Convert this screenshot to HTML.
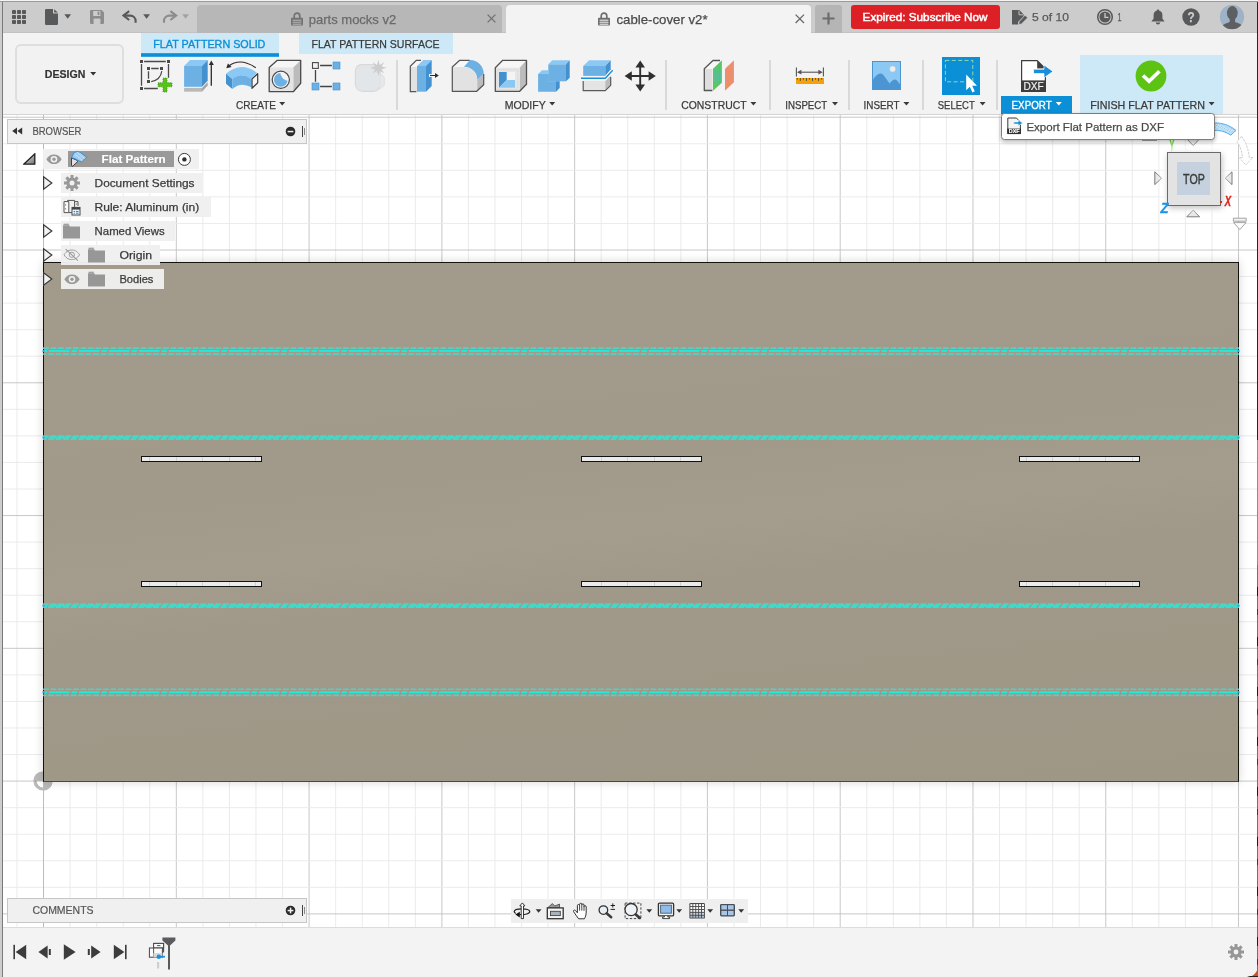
<!DOCTYPE html>
<html lang="en"><head><meta charset="utf-8"><title>cable-cover v2 - Flat Pattern</title>
<style>
html,body{margin:0;padding:0;}
body{width:1258px;height:977px;overflow:hidden;position:relative;background:#fff;font-family:"Liberation Sans",sans-serif;}
.a{position:absolute;display:block;}
.x{will-change:transform;}
svg text{font-family:"Liberation Sans",sans-serif;white-space:pre;}
</style></head>
<body>
<svg class="a" style="left:0px;top:0px;" width="1258" height="977"><g stroke-width="0.9" fill="none"><path d="M16.99 115V927" stroke="#e9e9e9"/><path d="M70.10 115V927" stroke="#e9e9e9"/><path d="M96.66 115V927" stroke="#e9e9e9"/><path d="M123.21 115V927" stroke="#e9e9e9"/><path d="M149.77 115V927" stroke="#e9e9e9"/><path d="M176.32 115V927" stroke="#c2c2c2"/><path d="M202.88 115V927" stroke="#e9e9e9"/><path d="M229.44 115V927" stroke="#e9e9e9"/><path d="M255.99 115V927" stroke="#e9e9e9"/><path d="M282.55 115V927" stroke="#e9e9e9"/><path d="M309.10 115V927" stroke="#c2c2c2"/><path d="M335.66 115V927" stroke="#e9e9e9"/><path d="M362.21 115V927" stroke="#e9e9e9"/><path d="M388.76 115V927" stroke="#e9e9e9"/><path d="M415.32 115V927" stroke="#e9e9e9"/><path d="M441.88 115V927" stroke="#c2c2c2"/><path d="M468.43 115V927" stroke="#e9e9e9"/><path d="M494.99 115V927" stroke="#e9e9e9"/><path d="M521.54 115V927" stroke="#e9e9e9"/><path d="M548.10 115V927" stroke="#e9e9e9"/><path d="M574.65 115V927" stroke="#c2c2c2"/><path d="M601.20 115V927" stroke="#e9e9e9"/><path d="M627.76 115V927" stroke="#e9e9e9"/><path d="M654.31 115V927" stroke="#e9e9e9"/><path d="M680.87 115V927" stroke="#e9e9e9"/><path d="M707.42 115V927" stroke="#c2c2c2"/><path d="M733.98 115V927" stroke="#e9e9e9"/><path d="M760.53 115V927" stroke="#e9e9e9"/><path d="M787.09 115V927" stroke="#e9e9e9"/><path d="M813.64 115V927" stroke="#e9e9e9"/><path d="M840.20 115V927" stroke="#c2c2c2"/><path d="M866.75 115V927" stroke="#e9e9e9"/><path d="M893.31 115V927" stroke="#e9e9e9"/><path d="M919.86 115V927" stroke="#e9e9e9"/><path d="M946.42 115V927" stroke="#e9e9e9"/><path d="M972.97 115V927" stroke="#c2c2c2"/><path d="M999.53 115V927" stroke="#e9e9e9"/><path d="M1026.09 115V927" stroke="#e9e9e9"/><path d="M1052.64 115V927" stroke="#e9e9e9"/><path d="M1079.19 115V927" stroke="#e9e9e9"/><path d="M1105.75 115V927" stroke="#c2c2c2"/><path d="M1132.30 115V927" stroke="#e9e9e9"/><path d="M1158.86 115V927" stroke="#e9e9e9"/><path d="M1185.41 115V927" stroke="#e9e9e9"/><path d="M1211.97 115V927" stroke="#e9e9e9"/><path d="M1238.52 115V927" stroke="#c2c2c2"/><path d="M3 117.23H1257" stroke="#c2c2c2"/><path d="M3 143.78H1257" stroke="#e9e9e9"/><path d="M3 170.34H1257" stroke="#e9e9e9"/><path d="M3 196.89H1257" stroke="#e9e9e9"/><path d="M3 223.45H1257" stroke="#e9e9e9"/><path d="M3 250.00H1257" stroke="#c2c2c2"/><path d="M3 276.56H1257" stroke="#e9e9e9"/><path d="M3 303.11H1257" stroke="#e9e9e9"/><path d="M3 329.67H1257" stroke="#e9e9e9"/><path d="M3 356.22H1257" stroke="#e9e9e9"/><path d="M3 382.78H1257" stroke="#c2c2c2"/><path d="M3 409.33H1257" stroke="#e9e9e9"/><path d="M3 435.89H1257" stroke="#e9e9e9"/><path d="M3 462.44H1257" stroke="#e9e9e9"/><path d="M3 489.00H1257" stroke="#e9e9e9"/><path d="M3 515.55H1257" stroke="#c2c2c2"/><path d="M3 542.11H1257" stroke="#e9e9e9"/><path d="M3 568.66H1257" stroke="#e9e9e9"/><path d="M3 595.22H1257" stroke="#e9e9e9"/><path d="M3 621.77H1257" stroke="#e9e9e9"/><path d="M3 648.33H1257" stroke="#c2c2c2"/><path d="M3 674.88H1257" stroke="#e9e9e9"/><path d="M3 701.44H1257" stroke="#e9e9e9"/><path d="M3 727.99H1257" stroke="#e9e9e9"/><path d="M3 754.55H1257" stroke="#e9e9e9"/><path d="M3 781.10H1257" stroke="#c2c2c2"/><path d="M3 807.65H1257" stroke="#e9e9e9"/><path d="M3 834.21H1257" stroke="#e9e9e9"/><path d="M3 860.76H1257" stroke="#e9e9e9"/><path d="M3 887.32H1257" stroke="#e9e9e9"/><path d="M3 913.88H1257" stroke="#c2c2c2"/></g><rect x="43" y="115" width="1" height="812" fill="#86e86a"/></svg>
<svg class="a" style="left:31px;top:769px;" width="24" height="24"><circle cx="12" cy="12" r="8" fill="none" stroke="#b9b9b9" stroke-width="3.2"/><path d="M12 12V2.4A9.6 9.6 0 0 0 2.4 12Z" fill="#b9b9b9"/><path d="M12 12V21.6A9.6 9.6 0 0 0 21.6 12Z" fill="#b9b9b9"/><rect x="4" y="11.5" width="1.3" height="1.3" fill="#e8835a"/></svg>
<div class="a" style="left:43px;top:781px;width:1px;height:12px;background:#86e86a;"></div>
<div class="a" style="left:43px;top:262px;width:1196px;height:520px;background:linear-gradient(174deg,#a29b8b 0%,#a19a8a 40%,#a49d8d 51%,#a09989 60%,#9e9786 100%);box-sizing:border-box;border:1px solid #14140f;border-bottom-color:#4a4840;box-shadow:0 0 9px rgba(0,0,0,0.17);"></div>
<svg class="a" style="left:0px;top:0px;" width="1258" height="977"><line x1="43" x2="1239" y1="348.05" y2="348.05" stroke="#55d3c2" stroke-opacity="0.9" stroke-width="1.7" stroke-dasharray="5.9 1.6" stroke-dashoffset="0"/><line x1="43" x2="1239" y1="354.15000000000003" y2="354.15000000000003" stroke="#55d3c2" stroke-opacity="0.9" stroke-width="1.7" stroke-dasharray="5.9 1.6" stroke-dashoffset="2.4"/><line x1="43" x2="1239" y1="351.1" y2="351.1" stroke="#21e8d9" stroke-width="2" stroke-dasharray="20.5 2.2 5.5 1.8" stroke-dashoffset="24"/><rect x="42.5" y="350.1" width="2" height="2" fill="#2aa0f0"/><rect x="1237.5" y="350.1" width="2" height="2" fill="#2aa0f0"/><line x1="43" x2="1239" y1="436.1" y2="436.1" stroke="#55d3c2" stroke-opacity="0.9" stroke-width="1.7" stroke-dasharray="5.9 1.6" stroke-dashoffset="0"/><line x1="43" x2="1239" y1="439.1" y2="439.1" stroke="#55d3c2" stroke-opacity="0.9" stroke-width="1.7" stroke-dasharray="5.9 1.6" stroke-dashoffset="2.4"/><line x1="43" x2="1239" y1="437.6" y2="437.6" stroke="#21e8d9" stroke-width="2" stroke-dasharray="20.5 2.2 5.5 1.8" stroke-dashoffset="24"/><rect x="42.5" y="436.6" width="2" height="2" fill="#2aa0f0"/><rect x="1237.5" y="436.6" width="2" height="2" fill="#2aa0f0"/><line x1="43" x2="1239" y1="604.2" y2="604.2" stroke="#55d3c2" stroke-opacity="0.9" stroke-width="1.7" stroke-dasharray="5.9 1.6" stroke-dashoffset="0"/><line x1="43" x2="1239" y1="607.2" y2="607.2" stroke="#55d3c2" stroke-opacity="0.9" stroke-width="1.7" stroke-dasharray="5.9 1.6" stroke-dashoffset="2.4"/><line x1="43" x2="1239" y1="605.7" y2="605.7" stroke="#21e8d9" stroke-width="2" stroke-dasharray="20.5 2.2 5.5 1.8" stroke-dashoffset="24"/><rect x="42.5" y="604.7" width="2" height="2" fill="#2aa0f0"/><rect x="1237.5" y="604.7" width="2" height="2" fill="#2aa0f0"/><line x1="43" x2="1239" y1="689.25" y2="689.25" stroke="#55d3c2" stroke-opacity="0.9" stroke-width="1.7" stroke-dasharray="5.9 1.6" stroke-dashoffset="0"/><line x1="43" x2="1239" y1="695.3499999999999" y2="695.3499999999999" stroke="#55d3c2" stroke-opacity="0.9" stroke-width="1.7" stroke-dasharray="5.9 1.6" stroke-dashoffset="2.4"/><line x1="43" x2="1239" y1="692.3" y2="692.3" stroke="#21e8d9" stroke-width="2" stroke-dasharray="20.5 2.2 5.5 1.8" stroke-dashoffset="24"/><rect x="42.5" y="691.3" width="2" height="2" fill="#2aa0f0"/><rect x="1237.5" y="691.3" width="2" height="2" fill="#2aa0f0"/></svg>
<div class="a" style="left:141px;top:456px;width:121px;height:6px;background:#ebebeb;box-sizing:border-box;border:1px solid #111;"></div>
<div class="a" style="left:149px;top:457px;width:1px;height:4px;background:#d2d2d2;"></div>
<div class="a" style="left:176px;top:457px;width:1px;height:4px;background:#d2d2d2;"></div>
<div class="a" style="left:202px;top:457px;width:1px;height:4px;background:#d2d2d2;"></div>
<div class="a" style="left:229px;top:457px;width:1px;height:4px;background:#d2d2d2;"></div>
<div class="a" style="left:255px;top:457px;width:1px;height:4px;background:#d2d2d2;"></div>
<div class="a" style="left:141px;top:581px;width:121px;height:6px;background:#ebebeb;box-sizing:border-box;border:1px solid #111;"></div>
<div class="a" style="left:149px;top:582px;width:1px;height:4px;background:#d2d2d2;"></div>
<div class="a" style="left:176px;top:582px;width:1px;height:4px;background:#d2d2d2;"></div>
<div class="a" style="left:202px;top:582px;width:1px;height:4px;background:#d2d2d2;"></div>
<div class="a" style="left:229px;top:582px;width:1px;height:4px;background:#d2d2d2;"></div>
<div class="a" style="left:255px;top:582px;width:1px;height:4px;background:#d2d2d2;"></div>
<div class="a" style="left:581px;top:456px;width:121px;height:6px;background:#ebebeb;box-sizing:border-box;border:1px solid #111;"></div>
<div class="a" style="left:601px;top:457px;width:1px;height:4px;background:#d2d2d2;"></div>
<div class="a" style="left:627px;top:457px;width:1px;height:4px;background:#d2d2d2;"></div>
<div class="a" style="left:654px;top:457px;width:1px;height:4px;background:#d2d2d2;"></div>
<div class="a" style="left:680px;top:457px;width:1px;height:4px;background:#d2d2d2;"></div>
<div class="a" style="left:581px;top:581px;width:121px;height:6px;background:#ebebeb;box-sizing:border-box;border:1px solid #111;"></div>
<div class="a" style="left:601px;top:582px;width:1px;height:4px;background:#d2d2d2;"></div>
<div class="a" style="left:627px;top:582px;width:1px;height:4px;background:#d2d2d2;"></div>
<div class="a" style="left:654px;top:582px;width:1px;height:4px;background:#d2d2d2;"></div>
<div class="a" style="left:680px;top:582px;width:1px;height:4px;background:#d2d2d2;"></div>
<div class="a" style="left:1019px;top:456px;width:121px;height:6px;background:#ebebeb;box-sizing:border-box;border:1px solid #111;"></div>
<div class="a" style="left:1026px;top:457px;width:1px;height:4px;background:#d2d2d2;"></div>
<div class="a" style="left:1052px;top:457px;width:1px;height:4px;background:#d2d2d2;"></div>
<div class="a" style="left:1079px;top:457px;width:1px;height:4px;background:#d2d2d2;"></div>
<div class="a" style="left:1105px;top:457px;width:1px;height:4px;background:#d2d2d2;"></div>
<div class="a" style="left:1132px;top:457px;width:1px;height:4px;background:#d2d2d2;"></div>
<div class="a" style="left:1019px;top:581px;width:121px;height:6px;background:#ebebeb;box-sizing:border-box;border:1px solid #111;"></div>
<div class="a" style="left:1026px;top:582px;width:1px;height:4px;background:#d2d2d2;"></div>
<div class="a" style="left:1052px;top:582px;width:1px;height:4px;background:#d2d2d2;"></div>
<div class="a" style="left:1079px;top:582px;width:1px;height:4px;background:#d2d2d2;"></div>
<div class="a" style="left:1105px;top:582px;width:1px;height:4px;background:#d2d2d2;"></div>
<div class="a" style="left:1132px;top:582px;width:1px;height:4px;background:#d2d2d2;"></div>
<div class="a" style="left:3px;top:2px;width:1254px;height:31px;background:#cccccc;"></div>
<div class="a" style="left:3px;top:32px;width:1254px;height:1px;background:#c2c2c2;"></div>
<svg class="a" style="left:12px;top:10px;" width="14" height="14"><rect x="0" y="0" width="4" height="4" rx="0.8" fill="#58595b"/><rect x="0" y="5" width="4" height="4" rx="0.8" fill="#58595b"/><rect x="0" y="10" width="4" height="4" rx="0.8" fill="#58595b"/><rect x="5" y="0" width="4" height="4" rx="0.8" fill="#58595b"/><rect x="5" y="5" width="4" height="4" rx="0.8" fill="#58595b"/><rect x="5" y="10" width="4" height="4" rx="0.8" fill="#58595b"/><rect x="10" y="0" width="4" height="4" rx="0.8" fill="#58595b"/><rect x="10" y="5" width="4" height="4" rx="0.8" fill="#58595b"/><rect x="10" y="10" width="4" height="4" rx="0.8" fill="#58595b"/></svg>
<svg class="a" style="left:45px;top:9px;" width="13" height="16"><path d="M1.2 0H8V4.6H13V14.8A1.2 1.2 0 0 1 11.8 16H1.2A1.2 1.2 0 0 1 0 14.8V1.2A1.2 1.2 0 0 1 1.2 0Z" fill="#58595b"/><path d="M9.2 0.2L12.8 3.6H9.2Z" fill="#58595b"/></svg>
<svg class="a" style="left:64px;top:14px;" width="8" height="5"><g transform="translate(0.3,0.2)"><path d="M0 0H6.8L3.4 4.6Z" fill="#58595b"/></g></svg>
<svg class="a" style="left:90px;top:10px;" width="14" height="14"><path d="M1.2 0H11.6L14 2.4V12.8A1.2 1.2 0 0 1 12.8 14H1.2A1.2 1.2 0 0 1 0 12.8V1.2A1.2 1.2 0 0 1 1.2 0Z" fill="#8c8c8c"/><rect x="3.2" y="1" width="7.2" height="5" fill="#cccccc"/><rect x="7.6" y="1.6" width="1.8" height="3.4" fill="#8c8c8c"/><rect x="3.6" y="8.6" width="6.8" height="5.4" fill="#cccccc"/></svg>
<svg class="a" style="left:122px;top:10px;" width="16" height="14"><path d="M7.2 1.2L1.4 5.6L7.2 10" fill="none" stroke="#58595b" stroke-width="2.1" stroke-linejoin="miter"/><path d="M2.4 5.6H8.4A5.2 5.2 0 0 1 13.6 10.8V12.8" fill="none" stroke="#58595b" stroke-width="2.1"/></svg>
<svg class="a" style="left:143px;top:14px;" width="7" height="5"><g transform="translate(0.2,0.2)"><path d="M0 0H6.8L3.4 4.6Z" fill="#58595b"/></g></svg>
<svg class="a" style="left:161px;top:10px;" width="17" height="14"><g transform="translate(0.6,0)"><g transform="translate(16,0) scale(-1,1)"><path d="M7.2 1.2L1.4 5.6L7.2 10" fill="none" stroke="#8c8c8c" stroke-width="2.1"/><path d="M2.4 5.6H8.4A5.2 5.2 0 0 1 13.6 10.8V12.8" fill="none" stroke="#8c8c8c" stroke-width="2.1"/></g></g></svg>
<svg class="a" style="left:182px;top:14px;" width="7" height="5"><g transform="translate(0.2,0.2)"><path d="M0 0H6.8L3.4 4.6Z" fill="#a3a3a3"/></g></svg>
<div class="a" style="left:197px;top:5px;width:305px;height:28px;background:#b7b7b7;border-radius:4px 4px 0 0;"></div>
<svg class="a" style="left:291px;top:12px;" width="12" height="14"><path d="M3.2 6V3.9A2.8 2.8 0 0 1 8.8 3.9V6" fill="none" stroke="#727272" stroke-width="1.7"/><rect x="0" y="5.8" width="12" height="7.8" rx="0.8" fill="#727272"/><rect x="1.6" y="7.7" width="8.8" height="1" fill="#b7b7b7"/><rect x="1.6" y="9.7" width="8.8" height="1" fill="#b7b7b7"/><rect x="1.6" y="11.7" width="8.8" height="1" fill="#b7b7b7"/></svg>
<svg class="a x" style="left:306px;top:10px" width="94" height="21"><text x="2.80" y="14.00" font-size="13" fill="#6a6a6a" textLength="87.41" lengthAdjust="spacingAndGlyphs" stroke="#6a6a6a" stroke-width="0.25">parts mocks v2</text></svg>
<svg class="a" style="left:487px;top:14px;" width="9" height="9"><path d="M0.6 0.6L8.4 8.4M8.4 0.6L0.6 8.4" stroke="#707070" stroke-width="1.3"/></svg>
<div class="a" style="left:506px;top:5px;width:305px;height:28px;background:#f3f3f3;border-radius:4px 4px 0 0;"></div>
<svg class="a" style="left:598px;top:12px;" width="12" height="14"><path d="M3.2 6V3.9A2.8 2.8 0 0 1 8.8 3.9V6" fill="none" stroke="#6e6e6e" stroke-width="1.7"/><rect x="0" y="5.8" width="12" height="7.8" rx="0.8" fill="#6e6e6e"/><rect x="1.6" y="7.7" width="8.8" height="1" fill="#f3f3f3"/><rect x="1.6" y="9.7" width="8.8" height="1" fill="#f3f3f3"/><rect x="1.6" y="11.7" width="8.8" height="1" fill="#f3f3f3"/></svg>
<svg class="a x" style="left:614px;top:10px" width="98" height="21"><text x="2.50" y="14.00" font-size="13" fill="#4a4a4a" textLength="91.10" lengthAdjust="spacingAndGlyphs" stroke="#4a4a4a" stroke-width="0.25">cable-cover v2*</text></svg>
<svg class="a" style="left:795px;top:14px;" width="10" height="10"><path d="M0.6 0.6L9 9M9 0.6L0.6 9" stroke="#666" stroke-width="1.3"/></svg>
<div class="a" style="left:815px;top:5px;width:27px;height:28px;background:#b5b5b5;border-radius:3px 3px 0 0;"></div>
<svg class="a" style="left:822px;top:12px;" width="13" height="13"><path d="M6.5 0.5V12.5M0.5 6.5H12.5" stroke="#6c6c6c" stroke-width="2.2"/></svg>
<div class="a" style="left:851px;top:5px;width:149px;height:24px;background:#dc2026;border-radius:3px;"></div>
<svg class="a x" style="left:860px;top:9px" width="131" height="18"><text x="2.60" y="12.00" font-size="11" fill="#ffffff" textLength="124.96" lengthAdjust="spacingAndGlyphs" stroke="#ffffff" stroke-width="0.45">Expired: Subscribe Now</text></svg>
<svg class="a" style="left:1012px;top:10px;" width="17" height="15"><path d="M0 0H7.4L11.6 4.4V6.4L6 12V14.6H0Z" fill="#58595b"/><path d="M7 0.6V4.8H11" fill="none" stroke="#cccccc" stroke-width="0.9"/><path d="M13 5.2L15.6 7.8L9.4 14L6.6 14.6L7.2 11.6Z" fill="#58595b" stroke="#cccccc" stroke-width="0.7"/></svg>
<svg class="a x" style="left:1030px;top:9px" width="43" height="18"><text x="2.00" y="12.00" font-size="11" fill="#58595b" textLength="37.00" lengthAdjust="spacingAndGlyphs" stroke="#58595b" stroke-width="0.25">5 of 10</text></svg>
<svg class="a" style="left:1096px;top:8px;" width="18" height="18"><g transform="translate(0.5,0.5)"><circle cx="8.5" cy="8.5" r="7.3" fill="none" stroke="#58595b" stroke-width="1.5"/><circle cx="8.5" cy="8.5" r="5.6" fill="#58595b"/><path d="M8.5 4.4V8.8H12" fill="none" stroke="#cccccc" stroke-width="1.3"/></g></svg>
<svg class="a x" style="left:1115px;top:9px" width="10" height="18"><text x="2.60" y="12.00" font-size="11" fill="#58595b" textLength="4.00" lengthAdjust="spacingAndGlyphs" stroke="#58595b" stroke-width="0.25">1</text></svg>
<svg class="a" style="left:1151px;top:9px;" width="14" height="16"><path d="M7 0.4A1.3 1.3 0 0 1 8.3 1.8A4.4 4.4 0 0 1 11.4 6V9.6L13.6 12.6H0.4L2.6 9.6V6A4.4 4.4 0 0 1 5.7 1.8A1.3 1.3 0 0 1 7 0.4Z" fill="#58595b"/><path d="M4.8 13.6H9.2A2.2 2 0 0 1 4.8 13.6Z" fill="#58595b"/></svg>
<svg class="a" style="left:1182px;top:8px;" width="18" height="18"><circle cx="9" cy="9" r="8.7" fill="#58595b"/></svg>
<svg class="a x" style="left:1185px;top:7px" width="14" height="23"><text x="2.40" y="15.40" font-size="14" fill="#cccccc" textLength="7.20" lengthAdjust="spacingAndGlyphs" font-weight="700" stroke="#cccccc" stroke-width="0.25">?</text></svg>
<svg class="a" style="left:1219px;top:4px;" width="26" height="26"><g transform="translate(0.5,0.5)"><defs><clipPath id="av"><circle cx="12.5" cy="12.5" r="12.2"/></clipPath></defs><circle cx="12.5" cy="12.5" r="12.2" fill="#9fb3c8"/><g clip-path="url(#av)"><ellipse cx="12.8" cy="8.6" rx="5.4" ry="7" fill="#5d5f62"/><rect x="10.2" y="12" width="5.4" height="7" fill="#5d5f62"/><path d="M1 25C2 19.5 7 18.6 10.4 17.4H15.4C19 18.6 23.6 19.5 24.6 25Z" fill="#5d5f62"/></g></g></svg>
<div class="a" style="left:3px;top:33px;width:1254px;height:81px;background:#f3f3f3;"></div>
<div class="a" style="left:3px;top:114px;width:1254px;height:1px;background:#d4d4d4;"></div>
<div class="a" style="left:15px;top:44px;width:109px;height:60px;background:#f2f2f2;box-sizing:border-box;border:2px solid #dedede;border-radius:6px;"></div>
<svg class="a x" style="left:42px;top:66px" width="47" height="18"><text x="2.80" y="12.00" font-size="11" fill="#333" textLength="40.50" lengthAdjust="spacingAndGlyphs" font-weight="700" stroke="#333" stroke-width="0.2">DESIGN</text></svg>
<svg class="a" style="left:90px;top:72px;" width="7" height="4"><g transform="translate(0.2,0)"><path d="M0 0H6L3.0 3.6Z" fill="#333"/></g></svg>
<div class="a" style="left:141px;top:33px;width:138px;height:21px;background:#cde9f8;"></div>
<div class="a" style="left:141px;top:53px;width:138px;height:4px;background:linear-gradient(#5db5e6 0,#0b8fd6 22%,#0b8fd6 80%,#79c3ec 100%);"></div>
<svg class="a x" style="left:151px;top:36px" width="119" height="18"><text x="2.30" y="12.00" font-size="11" fill="#0b8fd6" textLength="112.10" lengthAdjust="spacingAndGlyphs" stroke="#0b8fd6" stroke-width="0.35">FLAT PATTERN SOLID</text></svg>
<div class="a" style="left:299px;top:33px;width:154px;height:21px;background:#cde9f8;"></div>
<svg class="a x" style="left:309px;top:36px" width="135" height="18"><text x="2.50" y="12.00" font-size="11" fill="#3a3a3a" textLength="128.09" lengthAdjust="spacingAndGlyphs" stroke="#3a3a3a" stroke-width="0.25">FLAT PATTERN SURFACE</text></svg>
<div class="a" style="left:396px;top:60px;width:2px;height:50px;background:#d9d9d9;"></div>
<div class="a" style="left:665px;top:60px;width:2px;height:50px;background:#d9d9d9;"></div>
<div class="a" style="left:769px;top:60px;width:2px;height:50px;background:#d9d9d9;"></div>
<div class="a" style="left:848px;top:60px;width:2px;height:50px;background:#d9d9d9;"></div>
<div class="a" style="left:922px;top:60px;width:2px;height:50px;background:#d9d9d9;"></div>
<div class="a" style="left:996px;top:60px;width:2px;height:50px;background:#d9d9d9;"></div>
<svg class="a x" style="left:234px;top:97px" width="47" height="18"><text x="2.00" y="12.00" font-size="11" fill="#3a3a3a" textLength="40.00" lengthAdjust="spacingAndGlyphs" stroke="#3a3a3a" stroke-width="0.25">CREATE</text></svg>
<svg class="a" style="left:279px;top:102px;" width="7" height="4"><g transform="translate(0.2,0)"><path d="M0 0H6L3.0 3.6Z" fill="#3a3a3a"/></g></svg>
<svg class="a x" style="left:502px;top:97px" width="47" height="18"><text x="2.70" y="12.00" font-size="11" fill="#3a3a3a" textLength="40.99" lengthAdjust="spacingAndGlyphs" stroke="#3a3a3a" stroke-width="0.25">MODIFY</text></svg>
<svg class="a" style="left:549px;top:102px;" width="7" height="4"><g transform="translate(0.2,0)"><path d="M0 0H6L3.0 3.6Z" fill="#3a3a3a"/></g></svg>
<svg class="a x" style="left:679px;top:97px" width="72" height="18"><text x="2.30" y="12.00" font-size="11" fill="#3a3a3a" textLength="65.20" lengthAdjust="spacingAndGlyphs" stroke="#3a3a3a" stroke-width="0.25">CONSTRUCT</text></svg>
<svg class="a" style="left:750px;top:102px;" width="7" height="4"><g transform="translate(0.4,0)"><path d="M0 0H6L3.0 3.6Z" fill="#3a3a3a"/></g></svg>
<svg class="a x" style="left:783px;top:97px" width="49" height="18"><text x="2.20" y="12.00" font-size="11" fill="#3a3a3a" textLength="42.10" lengthAdjust="spacingAndGlyphs" stroke="#3a3a3a" stroke-width="0.25">INSPECT</text></svg>
<svg class="a" style="left:832px;top:102px;" width="6" height="4"><path d="M0 0H6L3.0 3.6Z" fill="#3a3a3a"/></svg>
<svg class="a x" style="left:861px;top:97px" width="43" height="18"><text x="2.50" y="12.00" font-size="11" fill="#3a3a3a" textLength="36.10" lengthAdjust="spacingAndGlyphs" stroke="#3a3a3a" stroke-width="0.25">INSERT</text></svg>
<svg class="a" style="left:903px;top:102px;" width="7" height="4"><g transform="translate(0.4,0)"><path d="M0 0H6L3.0 3.6Z" fill="#3a3a3a"/></g></svg>
<svg class="a x" style="left:935px;top:97px" width="43" height="18"><text x="2.80" y="12.00" font-size="11" fill="#3a3a3a" textLength="36.90" lengthAdjust="spacingAndGlyphs" stroke="#3a3a3a" stroke-width="0.25">SELECT</text></svg>
<svg class="a" style="left:979px;top:102px;" width="7" height="4"><g transform="translate(0.6,0)"><path d="M0 0H6L3.0 3.6Z" fill="#3a3a3a"/></g></svg>
<div class="a" style="left:1001px;top:96px;width:71px;height:18px;background:#0b8fd6;"></div>
<svg class="a x" style="left:1009px;top:97px" width="46" height="18"><text x="2.60" y="12.00" font-size="11" fill="#ffffff" textLength="40.00" lengthAdjust="spacingAndGlyphs" stroke="#ffffff" stroke-width="0.35">EXPORT</text></svg>
<svg class="a" style="left:1055px;top:102px;" width="7" height="4"><g transform="translate(0.8,0)"><path d="M0 0H6L3.0 3.6Z" fill="#ffffff"/></g></svg>
<div class="a" style="left:1080px;top:55px;width:143px;height:59px;background:#cde9f8;"></div>
<svg class="a x" style="left:1088px;top:97px" width="121" height="18"><text x="2.20" y="12.00" font-size="11" fill="#3a3a3a" textLength="114.80" lengthAdjust="spacingAndGlyphs" stroke="#3a3a3a" stroke-width="0.25">FINISH FLAT PATTERN</text></svg>
<svg class="a" style="left:1208px;top:102px;" width="7" height="4"><g transform="translate(0.6,0)"><path d="M0 0H6L3.0 3.6Z" fill="#3a3a3a"/></g></svg>
<svg class="a" style="left:1135px;top:60px;" width="32" height="32"><circle cx="16" cy="16" r="15.4" fill="#5cc313"/><path d="M8 15.5L14.1 21.3L24.4 11.2" fill="none" stroke="#fff" stroke-width="3.7"/></svg>
<svg class="a" style="left:139px;top:59px;" width="35" height="35"><path d="M5.1 2.5H26.8M2.5 5V26.8M29.5 5V18.7M5.1 29.5H18.8" stroke="#4a4a4a" stroke-width="1.3" fill="none"/><rect x="1.0" y="1.0" width="3" height="3" fill="#4a4a4a"/><rect x="28.0" y="1.0" width="3" height="3" fill="#4a4a4a"/><rect x="1.0" y="28.0" width="3" height="3" fill="#4a4a4a"/><path d="M12.2 9.5H19.7M9.5 12.2V19.7" stroke="#4a4a4a" stroke-width="1.3" fill="none"/><path d="M22.8 12.2C22 17.8 18 21.6 12.2 22.7" fill="none" stroke="#4a4a4a" stroke-width="1.2"/><rect x="8.0" y="8.0" width="3" height="3" fill="#4a4a4a"/><rect x="21.0" y="8.0" width="3" height="3" fill="#4a4a4a"/><rect x="8.0" y="21.0" width="3" height="3" fill="#4a4a4a"/><path d="M24 19H28V23.8H33V27.8H28V33H24V27.8H19V23.8H24Z" fill="#55c414" stroke="#3c8c12" stroke-width="0.7" stroke-dasharray="1.1 0.9"/></svg>
<svg class="a" style="left:183px;top:59px;" width="32" height="34"><path d="M1.1 28.9H19V32.7H1.1Z" fill="#b9b9b9"/><path d="M19 28.9L24.7 23V26.4L19 32.7Z" fill="#a6a6a6"/><path d="M1.1 7L7 1.1H24.7L19 7Z" fill="#8cc8f4"/><path d="M1.1 7H19V27.8H1.1Z" fill="#6cb0e4"/><path d="M19 7L24.7 1.1V21.8L19 27.8Z" fill="#4491cf"/><path d="M28.3 26.8V4.6" stroke="#2c2c2c" stroke-width="1.3"/><path d="M28.3 1.4L25.9 6H30.8Z" fill="#2c2c2c"/></svg>
<svg class="a" style="left:225px;top:59px;" width="36" height="32"><path d="M1 14.7Q16.1 1.8 32 13.7L26.3 19.7Q15.8 12.75 7.3 20Z" fill="#8cc8f4"/><path d="M1 14.7L7.3 20V30L1 24.7Z" fill="#4491cf"/><path d="M7.3 20Q15.8 12.75 26.3 19.7V28.3Q15.95 22.25 7.3 30Z" fill="#6cb0e4"/><path d="M27 20L32.7 14.7V23.7L27 29.3Z" fill="#f6f6f6" stroke="#3a3a3a" stroke-width="1.2" stroke-linejoin="round"/><path d="M30.7 8.7Q15.4 -1.65 3.7 7" fill="none" stroke="#2c2c2c" stroke-width="1.1"/><path d="M1.3 9.2L2.9 4.6L6.6 8Z" fill="#2c2c2c"/></svg>
<svg class="a" style="left:268px;top:59px;" width="35" height="35"><defs><clipPath id="hc"><circle cx="12.8" cy="20.8" r="7.5"/></clipPath></defs><path d="M1.2 8.5L9.3 1.3H32.7L25.3 8.5Z" fill="#f6f6f6"/><path d="M25.3 8.5L32.7 1.3V24.3L25.3 32.7Z" fill="#bcbcbc"/><path d="M1.2 8.5H25.3V32.7H1.2Z" fill="#e4e4e4"/><path d="M1.2 8.5L9.3 1.3H32.7V24.3L25.3 32.7H1.2Z" fill="none" stroke="#4a4a4a" stroke-width="1.3" stroke-linejoin="round"/><circle cx="12.8" cy="20.8" r="8.6" fill="#f4f4f4" stroke="#4a4a4a" stroke-width="1.2"/><g clip-path="url(#hc)"><circle cx="12.8" cy="20.8" r="6.9" fill="#6cb0e4"/><circle cx="21.6" cy="12.4" r="9.6" fill="#f4f4f4"/></g></svg>
<svg class="a" style="left:311px;top:61px;" width="30" height="30"><path d="M9.1 4.5H20.9M9.1 25.5H20.9M4.5 9V20.7" stroke="#444" stroke-width="1.3" fill="none"/><rect x="1.5" y="1.6" width="5.8" height="5.8" fill="#f3f3f3" stroke="#4a4a4a" stroke-width="1.1"/><rect x="22" y="1" width="7" height="7" fill="#6cb0e4" stroke="#4491cf" stroke-width="0.6"/><rect x="1" y="22" width="7" height="7" fill="#6cb0e4" stroke="#4491cf" stroke-width="0.6"/><rect x="22" y="22" width="7" height="7" fill="#6cb0e4" stroke="#4491cf" stroke-width="0.6"/></svg>
<svg class="a" style="left:354px;top:59px;" width="34" height="34"><path d="M8 5.6H20.6L26.4 9.4V25.4C26.4 29.8 23 32.4 19 32.4H9.4C4.6 32.4 1.4 29.6 1.4 25V12C1.4 8 4 5.6 8 5.6Z" fill="#e3e6e9" stroke="#d8d8d8" stroke-width="1.1"/><path d="M20.6 5.6C17.6 9.8 17.6 12 26.4 14.6" fill="none" stroke="#dedede" stroke-width="1"/><path d="M26.4 14.6L30.2 18.2V26.4L26.4 29.6" fill="#e9e9e9" stroke="#dcdcdc" stroke-width="1"/><path d="M24.4 0.8L25.8 6L30.4 3L27.6 7.6L32.8 8.8L27.6 10.2L30.2 14.6L25.8 11.8L24.4 17L23 11.8L18.6 14.6L21.2 10.2L16 8.8L21.2 7.6L18.4 3L23 6Z" fill="#cdcdcd"/></svg>
<svg class="a" style="left:409px;top:59px;" width="32" height="34"><path d="M1.3 7.3L7.3 1.3H14V32.7H1.3Z" fill="#f7f7f7"/><path d="M2 8H8V32H2Z" fill="#e2e2e2"/><path d="M7.4 32.7H1.3V7.3L7.3 1.3H12" fill="none" stroke="#555" stroke-width="1.2"/><path d="M8 7L14.3 1.1H22.7L17 7Z" fill="#8cc8f4"/><path d="M8 7H17V32.7H8Z" fill="#6cb0e4"/><path d="M17 7L22.7 1.1V27L17 32.7Z" fill="#4491cf"/><path d="M20 16.5H27" stroke="#fff" stroke-width="2.8"/><path d="M21 16.5H27" stroke="#2c2c2c" stroke-width="1.1"/><path d="M29.8 16.5L26 14.1V18.9Z" fill="#2c2c2c"/></svg>
<svg class="a" style="left:451px;top:59px;" width="35" height="34"><path d="M1.3 8L8.7 1.3H19L13 7.7Z" fill="#f7f7f7"/><path d="M13 7.7L19 1A13.7 13.7 0 0 1 32.7 14.7L26.3 21A13.3 13.3 0 0 0 13 7.7Z" fill="#6cb0e4"/><path d="M1.3 8H13A13.3 13.3 0 0 1 26.3 21V32.3H1.3Z" fill="#e2e2e2"/><path d="M26.3 21L32.7 14.7V25.7L25.7 32.3H26.3Z" fill="#bcbcbc"/><path d="M18.6 1.3H8.7L1.3 8V32.3H25.7L32.7 25.7V15" fill="none" stroke="#555" stroke-width="1.2" stroke-linejoin="round"/></svg>
<svg class="a" style="left:494px;top:59px;" width="35" height="34"><path d="M1.3 8.7L8.7 1.3H32.5L25.7 8.7Z" fill="#f6f6f6"/><path d="M25.7 8.7L32.5 1.3V25.3L25.7 32.3Z" fill="#bcbcbc"/><path d="M1.3 8.7H25.7V32.3H1.3Z" fill="#e6e6e6"/><path d="M3.2 10.6H23.8V30.4H3.2Z" fill="none" stroke="#d2d2d2" stroke-width="0.9" stroke-dasharray="1 1"/><path d="M5 13H21V28.7H5Z" fill="#f4f4f4"/><path d="M5 13H12.7V21L5 28.7Z" fill="#4491cf"/><path d="M12.7 21H21V28.7H5Z" fill="#8cc8f4"/><path d="M1.3 8.7L8.7 1.3H32.5V25.3L25.7 32.3H1.3Z" fill="none" stroke="#505050" stroke-width="1.3" stroke-linejoin="round"/></svg>
<svg class="a" style="left:537px;top:59px;" width="35" height="34"><path d="M11.3 5.3L15.3 1.3H32.7L29 5.3Z" fill="#8cc8f4"/><path d="M29 5.3L32.7 1.3V18.7L29 22.3Z" fill="#4491cf"/><path d="M11.3 5.3H29V22.3H11.3Z" fill="#6cb0e4"/><path d="M1.1 15L5 11.3H11.4V15Z" fill="#8cc8f4"/><path d="M1.1 15H11.4V22.3H19V32.7H1.1Z" fill="#6cb0e4"/><path d="M11.3 15H19.1V22.4H11.3Z" fill="#6cb0e4"/><path d="M19 22.3H22.7V29L19 32.7Z" fill="#4491cf"/></svg>
<svg class="a" style="left:580px;top:59px;" width="35" height="34"><path d="M3.2 22H25.3V31.7H3.2Z" fill="#e4e4e4"/><path d="M25.3 22L30.7 16.5V26.3L25.3 31.7Z" fill="#bcbcbc"/><path d="M3.2 22V31.7H25.3L30.7 26.3V18" fill="none" stroke="#5a5a5a" stroke-width="1.2" stroke-linejoin="round"/><path d="M3.2 7L9 1.3H30.7L25.3 7Z" fill="#8cc8f4"/><path d="M3.2 7H25.3V16.9H3.2Z" fill="#6cb0e4"/><path d="M25.3 7L30.7 1.3V10.3L25.3 16.9Z" fill="#4491cf"/><path d="M1 19.3H25.3L32.7 11.3" fill="none" stroke="#f8f8f8" stroke-width="3.4"/><path d="M1 19.3H25.3L32.7 11.3" fill="none" stroke="#1a8fd8" stroke-width="1.4"/></svg>
<svg class="a" style="left:624px;top:60px;" width="32" height="32"><path d="M16.2 5V27M5 16H27.4" stroke="#2f2f2f" stroke-width="1.9"/><path d="M16.2 0.4L21 7.6H11.4Z" fill="#2f2f2f"/><path d="M16.2 31.6L21 24.4H11.4Z" fill="#2f2f2f"/><path d="M0.6 16L7.8 11.2V20.8Z" fill="#2f2f2f"/><path d="M31.8 16L24.6 11.2V20.8Z" fill="#2f2f2f"/></svg>
<svg class="a" style="left:703px;top:59px;" width="33" height="34"><defs><pattern id="gp" width="2.2" height="2.2" patternUnits="userSpaceOnUse"><rect width="2.2" height="2.2" fill="#56c1ae"/><circle cx="1.1" cy="1.1" r="0.85" fill="#5ccb1c"/></pattern></defs><path d="M1.3 9.7L10 1.5H18.9L10 9.7Z" fill="#f7f7f7"/><path d="M2 10H9.4V31H2Z" fill="#dedede"/><path d="M9.4 31.5H1.3V9.7L10 1.5H17" fill="none" stroke="#555" stroke-width="1.3" stroke-linejoin="round"/><path d="M10 9.7L18.9 1.3V23.7L10 31.7Z" fill="url(#gp)"/><path d="M22 10L30.9 1.3V23.3L22 31.7Z" fill="#ea8d70"/><circle cx="24.2" cy="8.0" r="0.6" fill="#f6a21a"/><circle cx="26.3" cy="6.8" r="0.6" fill="#f6a21a"/><circle cx="28.4" cy="5.6" r="0.6" fill="#f6a21a"/><circle cx="24.2" cy="11.1" r="0.6" fill="#f6a21a"/><circle cx="26.3" cy="9.9" r="0.6" fill="#f6a21a"/><circle cx="28.4" cy="8.7" r="0.6" fill="#f6a21a"/><circle cx="24.2" cy="14.2" r="0.6" fill="#f6a21a"/><circle cx="26.3" cy="13.0" r="0.6" fill="#f6a21a"/><circle cx="28.4" cy="11.8" r="0.6" fill="#f6a21a"/><circle cx="24.2" cy="17.3" r="0.6" fill="#f6a21a"/><circle cx="26.3" cy="16.1" r="0.6" fill="#f6a21a"/><circle cx="28.4" cy="14.9" r="0.6" fill="#f6a21a"/><circle cx="24.2" cy="20.4" r="0.6" fill="#f6a21a"/><circle cx="26.3" cy="19.2" r="0.6" fill="#f6a21a"/><circle cx="28.4" cy="18.0" r="0.6" fill="#f6a21a"/><circle cx="24.2" cy="23.5" r="0.6" fill="#f6a21a"/><circle cx="26.3" cy="22.3" r="0.6" fill="#f6a21a"/><circle cx="28.4" cy="21.1" r="0.6" fill="#f6a21a"/><circle cx="24.2" cy="26.6" r="0.6" fill="#f6a21a"/><circle cx="26.3" cy="25.4" r="0.6" fill="#f6a21a"/><circle cx="28.4" cy="24.2" r="0.6" fill="#f6a21a"/></svg>
<svg class="a" style="left:795px;top:66px;" width="30" height="20"><path d="M1.4 1.6V10.6M28.4 1.6V10.6" stroke="#555" stroke-width="1.1"/><path d="M4 6.2H26" stroke="#555" stroke-width="1.1"/><path d="M2 6.2L6.4 3.8V8.6Z" fill="#555"/><path d="M27.8 6.2L23.4 3.8V8.6Z" fill="#555"/><rect x="1" y="12" width="28" height="6" fill="#f5a20a"/><rect x="1.75" y="12" width="0.95" height="1.7" fill="#4d4a3c"/><rect x="4.80" y="12" width="0.95" height="2.9" fill="#4d4a3c"/><rect x="7.85" y="12" width="0.95" height="1.7" fill="#4d4a3c"/><rect x="10.90" y="12" width="0.95" height="2.9" fill="#4d4a3c"/><rect x="13.95" y="12" width="0.95" height="1.7" fill="#4d4a3c"/><rect x="17.00" y="12" width="0.95" height="2.9" fill="#4d4a3c"/><rect x="20.05" y="12" width="0.95" height="1.7" fill="#4d4a3c"/><rect x="23.10" y="12" width="0.95" height="2.9" fill="#4d4a3c"/><rect x="26.15" y="12" width="0.95" height="1.7" fill="#4d4a3c"/></svg>
<svg class="a" style="left:872px;top:61px;" width="29" height="29"><rect x="0" y="0" width="29" height="29" fill="#8cc8f4"/><path d="M0.5 29V19.4C4 13.4 8 10.6 11 13.6L17.6 22.4C20 19.6 22.6 17 25 19.6L28.5 24V28.5Z" fill="#4b95d2"/><circle cx="20.6" cy="8" r="3" fill="#eeeeee" stroke="#b9c6d2" stroke-width="0.5"/><rect x="0.5" y="0.5" width="28" height="28" fill="none" stroke="#4b95d2" stroke-width="1"/></svg>
<div class="a" style="left:942px;top:57px;width:38px;height:38px;background:#0b8fd6;"></div>
<svg class="a" style="left:942px;top:57px;" width="38" height="38"><rect x="3.4" y="3.4" width="27.4" height="21.4" fill="none" stroke="#a6e0a0" stroke-width="0.9" stroke-dasharray="4 2.4"/><path d="M24.2 17.4V33.2L27.8 29.8L30.4 35.4L32.8 34.2L30.2 28.8H35Z" fill="#fff"/></svg>
<svg class="a" style="left:1020px;top:59px;" width="34" height="34"><path d="M1.6 1.6H17.2L25.4 9.6V32.4H1.6Z" fill="#fff" stroke="#3d3d3d" stroke-width="1.2" stroke-linejoin="round"/><path d="M17.2 1.6V9.6H25.4Z" fill="#3d3d3d"/><rect x="1" y="21.4" width="25" height="11.6" fill="#3d3d3d"/><path d="M13.6 10.2H24V6L33 12.4L24 18.8V14.6H13.6Z" fill="#1a8fd8" stroke="#fff" stroke-width="0.7"/></svg>
<svg class="a x" style="left:1021px;top:78px" width="27" height="18"><text x="2.40" y="12.40" font-size="10.5" fill="#f0f0f0" textLength="20.20" lengthAdjust="spacingAndGlyphs" stroke="#f0f0f0" stroke-width="0.2">DXF</text></svg>
<div class="a" style="left:7px;top:119px;width:300px;height:25px;background:#f0f0f0;box-sizing:border-box;border:1px solid #c6c6c6;"></div>
<svg class="a" style="left:12px;top:127px;" width="11" height="8"><path d="M5 0.4V7.4L0.2 3.9Z" fill="#333"/><path d="M10.2 0.4V7.4L5.4 3.9Z" fill="#333"/></svg>
<svg class="a x" style="left:30px;top:123px" width="55" height="18"><text x="2.40" y="12.00" font-size="11" fill="#555" textLength="48.99" lengthAdjust="spacingAndGlyphs" stroke="#555" stroke-width="0.2">BROWSER</text></svg>
<svg class="a" style="left:285px;top:126px;" width="11" height="11"><circle cx="5.5" cy="5.5" r="4.8" fill="#2b2b2b"/><rect x="2.6" y="4.8" width="5.8" height="1.5" fill="#f0f0f0"/></svg>
<div class="a" style="left:302px;top:126px;width:1px;height:11px;background:#444;"></div>
<div class="a" style="left:304px;top:128px;width:1px;height:7px;background:#888;"></div>
<div class="a" style="left:43px;top:149px;width:156px;height:20px;background:rgba(239,239,239,0.97);"></div>
<svg class="a" style="left:23px;top:153px;" width="13" height="12"><defs><linearGradient id="tg" x1="0" y1="0" x2="1" y2="1"><stop offset="0" stop-color="#f4f4f4"/><stop offset="1" stop-color="#6e6e6e"/></linearGradient></defs><path d="M11.8 0.8V11.2H0.8Z" fill="url(#tg)" stroke="#222" stroke-width="1.3"/></svg>
<svg class="a" style="left:46px;top:154px;" width="16" height="11"><g transform="translate(0,0.3)"><path d="M0.4 5C3 0.6 6 0.2 8 0.2S13 0.6 15.6 5C13 9.4 10 9.8 8 9.8S3 9.4 0.4 5Z" fill="#9a9a9a"/><circle cx="8" cy="5" r="3.3" fill="#f0f0f0"/><circle cx="8" cy="5" r="1.7" fill="#9a9a9a"/></g></svg>
<div class="a" style="left:68px;top:151px;width:106px;height:16px;background:#999999;"></div>
<svg class="a" style="left:69px;top:150px;" width="20" height="18"><path d="M2.5 8L7.6 10L8.6 11.6L3.3 16.6L2.5 15Z" fill="#e2e2e2" stroke="#333" stroke-width="0.9" stroke-linejoin="round"/><path d="M2.5 7.5L5 2.5Q9 0 11.5 2.5L17.8 7.2L12.5 12L9 10.4Q6 8.4 2.5 7.5Z" fill="#9fcbef" stroke="#2e8ad2" stroke-width="0.9" stroke-linejoin="round"/><path d="M6 4.4L13.6 10.4M8.4 2.6L15.6 8.6" stroke="#d6e9f8" stroke-width="0.8"/></svg>
<svg class="a x" style="left:99px;top:151px" width="70" height="18"><text x="2.60" y="12.00" font-size="11" fill="#ffffff" textLength="63.99" lengthAdjust="spacingAndGlyphs" font-weight="700" stroke="#ffffff" stroke-width="0.15">Flat Pattern</text></svg>
<svg class="a" style="left:177px;top:152px;" width="15" height="15"><g transform="translate(0.4,0.4)"><circle cx="7" cy="7" r="6" fill="#fff" stroke="#2f2f2f" stroke-width="0.95"/><circle cx="7" cy="7" r="2.2" fill="#2f2f2f"/></g></svg>
<div class="a" style="left:61px;top:173px;width:142px;height:20px;background:rgba(239,239,239,0.97);"></div>
<svg class="a" style="left:43px;top:176px;" width="11" height="14"><path d="M0.6 0.8L8.8 7L0.6 13.2Z" fill="#f2f2f2" stroke="#3a3a3a" stroke-width="1.2" stroke-linejoin="miter"/></svg>
<svg class="a" style="left:64px;top:175px;" width="16" height="16"><g fill="#999"><circle cx="8" cy="8" r="5.6"/><rect x="6.5" y="0" width="3" height="4" transform="rotate(0 8 8)"/><rect x="6.5" y="0" width="3" height="4" transform="rotate(45 8 8)"/><rect x="6.5" y="0" width="3" height="4" transform="rotate(90 8 8)"/><rect x="6.5" y="0" width="3" height="4" transform="rotate(135 8 8)"/><rect x="6.5" y="0" width="3" height="4" transform="rotate(180 8 8)"/><rect x="6.5" y="0" width="3" height="4" transform="rotate(225 8 8)"/><rect x="6.5" y="0" width="3" height="4" transform="rotate(270 8 8)"/><rect x="6.5" y="0" width="3" height="4" transform="rotate(315 8 8)"/></g><circle cx="8" cy="8" r="2.5" fill="#f0f0f0"/></svg>
<svg class="a x" style="left:92px;top:175px" width="106" height="18"><text x="2.60" y="12.00" font-size="11" fill="#3a3a3a" textLength="99.90" lengthAdjust="spacingAndGlyphs" stroke="#3a3a3a" stroke-width="0.25">Document Settings</text></svg>
<div class="a" style="left:61px;top:197px;width:150px;height:20px;background:rgba(239,239,239,0.97);"></div>
<svg class="a" style="left:63px;top:198px;" width="18" height="18"><path d="M4.6 2.4H11.6V11" fill="none" stroke="#555" stroke-width="1"/><path d="M4.6 2.4V3.6" stroke="#555"/><path d="M1 3.6H5.8V14.6H1Z" fill="#fafafa" stroke="#555" stroke-width="1"/><path d="M11.6 3.6H15V8" fill="none" stroke="#555" stroke-width="1"/><path d="M5.8 14.6H9" stroke="#555"/><path d="M2.6 6.4V7.4M2.6 10.4V11.4M13.4 5.6V6.6" stroke="#555" stroke-width="1"/><rect x="9" y="9.4" width="8" height="7.6" fill="#fff" stroke="#444" stroke-width="1"/><rect x="9" y="9.4" width="8" height="2.2" fill="#444"/><rect x="10.6" y="12.8" width="1.6" height="1.2" fill="#3b8fd4"/><rect x="13" y="12.8" width="2.6" height="1.2" fill="#3b8fd4"/><rect x="10.6" y="14.6" width="1.6" height="1.2" fill="#3b8fd4"/><rect x="13" y="14.6" width="2.6" height="1.2" fill="#3b8fd4"/></svg>
<svg class="a x" style="left:92px;top:199px" width="111" height="18"><text x="2.60" y="12.00" font-size="11" fill="#3a3a3a" textLength="104.61" lengthAdjust="spacingAndGlyphs" stroke="#3a3a3a" stroke-width="0.25">Rule: Aluminum (in)</text></svg>
<div class="a" style="left:61px;top:221px;width:114px;height:20px;background:rgba(239,239,239,0.97);"></div>
<svg class="a" style="left:43px;top:224px;" width="11" height="14"><path d="M0.6 0.8L8.8 7L0.6 13.2Z" fill="#f2f2f2" stroke="#3a3a3a" stroke-width="1.2" stroke-linejoin="miter"/></svg>
<svg class="a" style="left:63px;top:223px;" width="17" height="16"><path d="M0 2.2H6.6V3.6H17V15.4H0Z" fill="#979797"/><path d="M0.6 1H5.8V2.2H0.6Z" fill="#979797"/><path d="M0.6 0.6H6V1.4H0.6Z" fill="#b0b0b0"/></svg>
<svg class="a x" style="left:92px;top:223px" width="77" height="18"><text x="2.60" y="12.00" font-size="11" fill="#3a3a3a" textLength="70.00" lengthAdjust="spacingAndGlyphs" stroke="#3a3a3a" stroke-width="0.25">Named Views</text></svg>
<div class="a" style="left:61px;top:245px;width:99px;height:20px;background:rgba(239,239,239,0.97);"></div>
<svg class="a" style="left:43px;top:248px;" width="11" height="14"><path d="M0.6 0.8L8.8 7L0.6 13.2Z" fill="#f2f2f2" stroke="#3a3a3a" stroke-width="1.2" stroke-linejoin="miter"/></svg>
<svg class="a" style="left:63px;top:248px;" width="18" height="14"><g transform="translate(0,0.4)"><path d="M1 6.4C3.6 2.4 6.4 1.6 8.8 1.6S14 2.4 16.6 6.4C14 10.4 11.2 11.2 8.8 11.2S3.6 10.4 1 6.4Z" fill="none" stroke="#9a9a9a" stroke-width="1"/><circle cx="8.8" cy="6.4" r="2.6" fill="none" stroke="#9a9a9a" stroke-width="1"/><path d="M2.6 0.8L15 12.2" stroke="#9a9a9a" stroke-width="1.1"/></g></svg>
<svg class="a" style="left:88px;top:247px;" width="17" height="16"><path d="M0 2.2H6.6V3.6H17V15.4H0Z" fill="#979797"/><path d="M0.6 1H5.8V2.2H0.6Z" fill="#979797"/><path d="M0.6 0.6H6V1.4H0.6Z" fill="#b0b0b0"/></svg>
<svg class="a x" style="left:117px;top:247px" width="39" height="18"><text x="2.40" y="12.00" font-size="11" fill="#3a3a3a" textLength="32.60" lengthAdjust="spacingAndGlyphs" stroke="#3a3a3a" stroke-width="0.25">Origin</text></svg>
<div class="a" style="left:61px;top:269px;width:103px;height:20px;background:rgba(239,239,239,0.97);"></div>
<svg class="a" style="left:43px;top:272px;" width="11" height="14"><path d="M0.6 0.8L8.8 7L0.6 13.2Z" fill="#f2f2f2" stroke="#3a3a3a" stroke-width="1.2" stroke-linejoin="miter"/></svg>
<svg class="a" style="left:64px;top:274px;" width="16" height="11"><g transform="translate(0,0.3)"><path d="M0.4 5C3 0.6 6 0.2 8 0.2S13 0.6 15.6 5C13 9.4 10 9.8 8 9.8S3 9.4 0.4 5Z" fill="#9a9a9a"/><circle cx="8" cy="5" r="3.3" fill="#f0f0f0"/><circle cx="8" cy="5" r="1.7" fill="#9a9a9a"/></g></svg>
<svg class="a" style="left:88px;top:271px;" width="17" height="16"><path d="M0 2.2H6.6V3.6H17V15.4H0Z" fill="#979797"/><path d="M0.6 1H5.8V2.2H0.6Z" fill="#979797"/><path d="M0.6 0.6H6V1.4H0.6Z" fill="#b0b0b0"/></svg>
<svg class="a x" style="left:117px;top:271px" width="40" height="18"><text x="2.40" y="12.00" font-size="11" fill="#3a3a3a" textLength="33.99" lengthAdjust="spacingAndGlyphs" stroke="#3a3a3a" stroke-width="0.25">Bodies</text></svg>
<svg class="a" style="left:1214px;top:118px;" width="42" height="50"><defs><pattern id="hp" width="2" height="2" patternUnits="userSpaceOnUse" patternTransform="rotate(35)"><rect width="2" height="2" fill="#cfe7f8"/><rect width="1" height="1" fill="#7cc0f0"/></pattern></defs><path d="M0.6 5C8 4.6 16 7.4 22 12.4L16.7 17.2C11.6 13.6 6 12.2 0.6 12.5Z" fill="url(#hp)" stroke="#48a6e6" stroke-width="0.9"/><path d="M27.6 18.3L23 23.5C26 28 28 33 28.4 39.5H25L31.8 46.9L38.9 39.5H35.2C34.6 31 31.6 23.6 27.6 18.3Z" fill="#fefefe" stroke="#c9c9c9" stroke-width="0.9" stroke-dasharray="2.4 1"/></svg>
<svg class="a" style="left:1186px;top:138px;" width="15" height="9"><path d="M0.8 0.8H13.6L7.2 7.6Z" fill="#e6e6e6" stroke="#6a6a6a" stroke-width="0.9" stroke-linejoin="miter"/></svg>
<svg class="a" style="left:1186px;top:209px;" width="15" height="9"><path d="M0.8 7.8H13.6L7.2 1Z" fill="#e6e6e6" stroke="#6a6a6a" stroke-width="0.9" stroke-linejoin="miter"/></svg>
<svg class="a" style="left:1154px;top:171px;" width="9" height="15"><path d="M0.8 0.8V13.6L7.6 7.2Z" fill="#e6e6e6" stroke="#6a6a6a" stroke-width="0.9" stroke-linejoin="miter"/></svg>
<svg class="a" style="left:1224px;top:171px;" width="9" height="15"><path d="M8 0.8V13.6L1.2 7.2Z" fill="#e6e6e6" stroke="#6a6a6a" stroke-width="0.9" stroke-linejoin="miter"/></svg>
<svg class="a x" style="left:1167px;top:134px" width="11" height="24"><text x="2.40" y="15.60" font-size="14.5" fill="#5ed22a" textLength="4.80" lengthAdjust="spacingAndGlyphs" font-weight="700" stroke="#5ed22a" stroke-width="0.3">Y</text></svg>
<div class="a" style="left:1170.6px;top:150.3px;width:1.6px;height:1.8px;background:#5ed22a;"></div>
<div class="a" style="left:1167px;top:152px;width:53.5px;height:53.5px;background:#e3e3e3;box-sizing:border-box;border:1px solid #6a6a6a;box-shadow:1px 2px 6px rgba(0,0,0,0.25),0 0 7px 5px rgba(255,255,255,0.85);"></div>
<div class="a" style="left:1177px;top:162px;width:33px;height:33px;background:#c5d1de;"></div>
<svg class="a x" style="left:1181px;top:168px" width="28" height="24"><text x="2.10" y="15.60" font-size="14.5" fill="#3d3d3d" textLength="21.70" lengthAdjust="spacingAndGlyphs" stroke="#3d3d3d" stroke-width="0.45">TOP</text></svg>
<svg class="a x" style="left:1158px;top:197px" width="15" height="24"><text x="2.52" y="15.80" font-size="15" fill="#1d92e4" textLength="8.06" lengthAdjust="spacingAndGlyphs" font-weight="700" font-style="italic" stroke="#1d92e4" stroke-width="0.3">Z</text></svg>
<svg class="a x" style="left:1222px;top:190px" width="13" height="24"><text x="2.64" y="15.60" font-size="14.5" fill="#e0261c" textLength="6.29" lengthAdjust="spacingAndGlyphs" font-weight="700" font-style="italic" stroke="#e0261c" stroke-width="0.4">X</text></svg>
<div class="a" style="left:1220px;top:201px;width:2px;height:1.5px;background:#e0261c;"></div>
<svg class="a" style="left:1232px;top:217px;" width="16" height="14"><path d="M1.4 1.2H14.2V4.2H1.4Z" fill="#f4f4f4" stroke="#9a9a9a" stroke-width="0.9"/><path d="M1.6 5.6H14L7.8 12.6Z" fill="#fdfdfd" stroke="#9a9a9a" stroke-width="0.9"/></svg>
<div class="a" style="left:1142px;top:139px;width:15px;height:2px;background:#9d9d9d;"></div>
<div class="a" style="left:1001px;top:113px;width:214px;height:27px;background:#ffffff;box-sizing:border-box;border:1px solid #7d7d7d;border-radius:3.5px;box-shadow:0 2px 4px rgba(0,0,0,0.28);"></div>
<svg class="a" style="left:1007px;top:117px;" width="17" height="18"><path d="M0.8 1H9.4L13.4 5V16.6H0.8Z" fill="#f4f4f4" stroke="#3a3a3a" stroke-width="1"/><rect x="0.2" y="11.6" width="13.7" height="5.3" fill="#2e2e2e"/><path d="M6.8 4.9H11.2V3L15.8 6L11.2 9V7.1H6.8Z" fill="#1a8fd8" stroke="#fff" stroke-width="0.6"/></svg>
<svg class="a x" style="left:1006px;top:125px" width="17" height="11"><text x="2.80" y="8.40" font-size="6.2" fill="#fff" textLength="10.80" lengthAdjust="spacingAndGlyphs" font-weight="700" stroke="#fff" stroke-width="0.15">DXF</text></svg>
<svg class="a x" style="left:1024px;top:119px" width="144" height="18"><text x="2.40" y="12.00" font-size="11" fill="#4a4a4a" textLength="137.60" lengthAdjust="spacingAndGlyphs" stroke="#4a4a4a" stroke-width="0.25">Export Flat Pattern as DXF</text></svg>
<div class="a" style="left:3px;top:927px;width:1254px;height:50px;background:#f3f3f3;"></div>
<div class="a" style="left:3px;top:927px;width:1254px;height:1px;background:#dcdcdc;"></div>
<div class="a" style="left:7px;top:898px;width:300px;height:25px;background:#f0f0f0;box-sizing:border-box;border:1px solid #c6c6c6;"></div>
<svg class="a x" style="left:30px;top:902px" width="68" height="18"><text x="2.40" y="12.00" font-size="11" fill="#555" textLength="61.21" lengthAdjust="spacingAndGlyphs" stroke="#555" stroke-width="0.2">COMMENTS</text></svg>
<svg class="a" style="left:285px;top:905px;" width="11" height="11"><circle cx="5.5" cy="5.5" r="4.8" fill="#2b2b2b"/><rect x="2.6" y="4.8" width="5.8" height="1.5" fill="#f0f0f0"/><rect x="4.8" y="2.6" width="1.5" height="5.8" fill="#f0f0f0"/></svg>
<div class="a" style="left:302px;top:905px;width:1px;height:11px;background:#444;"></div>
<div class="a" style="left:304px;top:907px;width:1px;height:7px;background:#888;"></div>
<div class="a" style="left:511px;top:899px;width:237px;height:24px;background:#efefef;"></div>
<svg class="a" style="left:513px;top:901px;" width="19" height="20"><path d="M6.6 13.5C12 14 16.8 12.6 16.8 10.6C16.8 8.6 13 7.8 9 7.8C5 7.8 1.2 8.6 1.2 10.6C1.2 11.4 1.8 12 2.8 12.5" fill="none" stroke="#222" stroke-width="1.2"/><path d="M9.35 1.9L11.9 4.9H10.5V17.6H8.2V4.9H6.8Z" fill="#fff" stroke="#222" stroke-width="0.9" stroke-linejoin="miter"/><path d="M2.4 13.6L6.8 10.7V16.6Z" fill="#111"/></svg>
<svg class="a" style="left:535px;top:909px;" width="7" height="4"><g transform="translate(0.7,0.2)"><path d="M0 0H5.8L2.9 3.6Z" fill="#333"/></g></svg>
<svg class="a" style="left:546px;top:902px;" width="19" height="18"><path d="M1.5 5.9L6.4 1.6L8.8 4L13.5 2.1V5.9Z" fill="#9a9a9a" stroke="#444" stroke-width="0.8" stroke-linejoin="round"/><rect x="1.3" y="5.9" width="15.9" height="10.8" fill="#f5f5f5" stroke="#333" stroke-width="1.3"/><rect x="4.5" y="9.3" width="9.8" height="4.3" fill="#aab2ba" stroke="#444" stroke-width="0.9"/></svg>
<svg class="a" style="left:572px;top:901px;" width="18" height="20"><path d="M5.4 11.8V4.6A1.1 1.1 0 0 1 7.6 4.6V3.4A1.1 1.1 0 0 1 9.8 3.4V4A1.1 1.1 0 0 1 12 4V5.8A1.1 1.1 0 0 1 14.2 5.8V11C14.2 14 13.4 16 12.4 17.8H6.6C5 15.6 3.2 13.2 1.6 10.6C1 9.2 2.6 8.4 3.6 9.6Z" fill="#fdfdfd" stroke="#333" stroke-width="1" stroke-linejoin="round"/><path d="M7.6 4.6V9.6M9.8 4V9.6M12 5.8V9.8" stroke="#333" stroke-width="0.9" fill="none"/></svg>
<svg class="a" style="left:598px;top:901px;" width="19" height="20"><circle cx="5.4" cy="9.1" r="4.3" fill="#e9eff5" stroke="#333" stroke-width="1.3"/><path d="M8.6 12.3L13.2 16.2" stroke="#3a3a3a" stroke-width="2.5" stroke-linecap="round"/><path d="M12.6 4.5H17M14.8 2.4V6.6M12.6 8.4H17" stroke="#222" stroke-width="1"/></svg>
<svg class="a" style="left:624px;top:901px;" width="18" height="20"><rect x="1.1" y="2.1" width="15.8" height="15.5" fill="none" stroke="#444" stroke-width="1" stroke-dasharray="2.4 1.6"/><circle cx="7.1" cy="8.6" r="6.1" fill="#eef3f8" stroke="#333" stroke-width="1.3"/><path d="M11.8 13.4L15.8 16.9" stroke="#3a3a3a" stroke-width="2.7" stroke-linecap="round"/></svg>
<svg class="a" style="left:646px;top:909px;" width="7" height="4"><g transform="translate(0.4,0.2)"><path d="M0 0H5.8L2.9 3.6Z" fill="#333"/></g></svg>
<svg class="a" style="left:657px;top:902px;" width="18" height="18"><rect x="1.4" y="1.1" width="15.2" height="12.8" rx="1.2" fill="#f2f2f2" stroke="#333" stroke-width="1.3"/><rect x="3.6" y="3.2" width="10.8" height="8" fill="#8fbcea" stroke="#5a6a7a" stroke-width="1"/><path d="M7.4 14V15H5.6V16.6H12.6V15H10.8V14" fill="#fafafa" stroke="#333" stroke-width="0.9"/></svg>
<svg class="a" style="left:676px;top:909px;" width="7" height="4"><g transform="translate(0.3,0.2)"><path d="M0 0H5.8L2.9 3.6Z" fill="#333"/></g></svg>
<svg class="a" style="left:688px;top:902px;" width="18" height="18"><rect x="1.4" y="1.1" width="15.5" height="15.5" rx="1.2" fill="#484848"/><rect x="2.4" y="2.1" width="2" height="2" fill="#ffffff"/><rect x="2.4" y="5.0" width="2" height="2" fill="#fbfbfb"/><rect x="2.4" y="7.9" width="2" height="2" fill="#eef0f2"/><rect x="2.4" y="10.8" width="2" height="2" fill="#c9d2dc"/><rect x="2.4" y="13.7" width="2" height="2" fill="#a9bed6"/><rect x="5.3" y="2.1" width="2" height="2" fill="#ffffff"/><rect x="5.3" y="5.0" width="2" height="2" fill="#fbfbfb"/><rect x="5.3" y="7.9" width="2" height="2" fill="#eef0f2"/><rect x="5.3" y="10.8" width="2" height="2" fill="#c9d2dc"/><rect x="5.3" y="13.7" width="2" height="2" fill="#a9bed6"/><rect x="8.2" y="2.1" width="2" height="2" fill="#ffffff"/><rect x="8.2" y="5.0" width="2" height="2" fill="#fbfbfb"/><rect x="8.2" y="7.9" width="2" height="2" fill="#eef0f2"/><rect x="8.2" y="10.8" width="2" height="2" fill="#c9d2dc"/><rect x="8.2" y="13.7" width="2" height="2" fill="#a9bed6"/><rect x="11.1" y="2.1" width="2" height="2" fill="#ffffff"/><rect x="11.1" y="5.0" width="2" height="2" fill="#fbfbfb"/><rect x="11.1" y="7.9" width="2" height="2" fill="#eef0f2"/><rect x="11.1" y="10.8" width="2" height="2" fill="#c9d2dc"/><rect x="11.1" y="13.7" width="2" height="2" fill="#a9bed6"/><rect x="14.0" y="2.1" width="2" height="2" fill="#ffffff"/><rect x="14.0" y="5.0" width="2" height="2" fill="#fbfbfb"/><rect x="14.0" y="7.9" width="2" height="2" fill="#eef0f2"/><rect x="14.0" y="10.8" width="2" height="2" fill="#c9d2dc"/><rect x="14.0" y="13.7" width="2" height="2" fill="#a9bed6"/></svg>
<svg class="a" style="left:707px;top:909px;" width="7" height="4"><g transform="translate(0.3,0.2)"><path d="M0 0H5.8L2.9 3.6Z" fill="#333"/></g></svg>
<svg class="a" style="left:719px;top:902px;" width="17" height="17"><rect x="1" y="1.9" width="15" height="12.6" rx="1.4" fill="#4a4f56"/><rect x="2.4" y="3.2" width="5.6" height="4.3" fill="#a9c6e6"/><rect x="2.4" y="8.9" width="5.6" height="4.3" fill="#a9c6e6"/><rect x="9" y="3.2" width="5.6" height="4.3" fill="#a9c6e6"/><rect x="9" y="8.9" width="5.6" height="4.3" fill="#a9c6e6"/></svg>
<svg class="a" style="left:738px;top:909px;" width="7" height="4"><g transform="translate(0.3,0.2)"><path d="M0 0H5.8L2.9 3.6Z" fill="#333"/></g></svg>
<svg class="a" style="left:13px;top:944px;" width="14" height="16"><rect x="0.4" y="0.8" width="1.6" height="14.4" fill="#3c3c3c"/><path d="M13.2 0.8V15.2L2.6 8Z" fill="#3c3c3c"/></svg>
<svg class="a" style="left:38px;top:945px;" width="14" height="14"><path d="M9.6 0.6V13.4L0.4 7Z" fill="#3c3c3c"/><rect x="10.8" y="4" width="2" height="6" fill="#3c3c3c"/></svg>
<svg class="a" style="left:63px;top:944px;" width="14" height="16"><path d="M0.8 0.2V15.8L12.6 8Z" fill="#3c3c3c"/></svg>
<svg class="a" style="left:87px;top:945px;" width="15" height="14"><rect x="0.8" y="4" width="2" height="6" fill="#3c3c3c"/><path d="M4.2 0.6V13.4L13.6 7Z" fill="#3c3c3c"/></svg>
<svg class="a" style="left:113px;top:944px;" width="14" height="16"><path d="M0.8 0.8V15.2L11.4 8Z" fill="#3c3c3c"/><rect x="12" y="0.8" width="1.6" height="14.4" fill="#3c3c3c"/></svg>
<svg class="a" style="left:148px;top:942px;" width="20" height="28"><path d="M5.6 1.4H15.6V10.4" fill="none" stroke="#444" stroke-width="1"/><rect x="5.6" y="1.4" width="10" height="4.6" fill="#fafafa" stroke="#444" stroke-width="1"/><path d="M9 3.6H12.4" stroke="#444" stroke-width="0.9"/><rect x="1.4" y="6" width="13" height="9.2" fill="#fbfbfb" stroke="#444" stroke-width="1"/><path d="M5.6 6V15.2" stroke="#444" stroke-width="0.9"/><rect x="5.4" y="11" width="9" height="4.4" fill="#d8d8d8"/><circle cx="10.8" cy="14.7" r="2.2" fill="#1b8fe0"/><path d="M10.8 14.7H17" stroke="#1b8fe0" stroke-width="1.7"/><rect x="9" y="20" width="2.2" height="6.5" fill="#cfcfcf"/></svg>
<svg class="a" style="left:162px;top:937px;" width="14" height="33"><path d="M0.4 0.4H13.4V3.4L8 8.6V32.4H6V8.6L0.4 3.4Z" fill="#5a5b5e"/></svg>
<svg class="a" style="left:1228px;top:944px;" width="16" height="16"><g fill="#979797"><circle cx="8" cy="8" r="5.6"/><rect x="6.5" y="0" width="3" height="4" transform="rotate(0 8 8)"/><rect x="6.5" y="0" width="3" height="4" transform="rotate(45 8 8)"/><rect x="6.5" y="0" width="3" height="4" transform="rotate(90 8 8)"/><rect x="6.5" y="0" width="3" height="4" transform="rotate(135 8 8)"/><rect x="6.5" y="0" width="3" height="4" transform="rotate(180 8 8)"/><rect x="6.5" y="0" width="3" height="4" transform="rotate(225 8 8)"/><rect x="6.5" y="0" width="3" height="4" transform="rotate(270 8 8)"/><rect x="6.5" y="0" width="3" height="4" transform="rotate(315 8 8)"/></g><circle cx="8" cy="8" r="2.4" fill="#f3f3f3"/></svg>
<div class="a" style="left:0px;top:0px;width:1258px;height:1px;background:#f4f4f4;"></div>
<div class="a" style="left:0px;top:1px;width:1258px;height:1px;background:#9a9a9a;"></div>
<div class="a" style="left:0px;top:2px;width:2px;height:975px;background:#cdcdcd;"></div>
<div class="a" style="left:2px;top:2px;width:1px;height:975px;background:#7a7a7a;"></div>
<div class="a" style="left:1257px;top:2px;width:1px;height:438px;background:#262626;"></div>
<div class="a" style="left:1257px;top:440px;width:1px;height:125px;background:#8c8c8c;"></div>
<div class="a" style="left:1257px;top:565px;width:1px;height:412px;background:repeating-linear-gradient(#c0562a 0,#c0562a 22px,#1c1c1c 22px,#1c1c1c 31px,#c0562a 31px,#c0562a 44px,#3a3a3a 44px,#3a3a3a 50px);"></div>
<svg class="a" style="left:1247px;top:966px;" width="11" height="11"><path d="M11 0V11H0A11 11 0 0 0 11 0Z" fill="#c0562a"/><path d="M0 11H11V10H3Z" fill="#222"/></svg>
</body></html>
